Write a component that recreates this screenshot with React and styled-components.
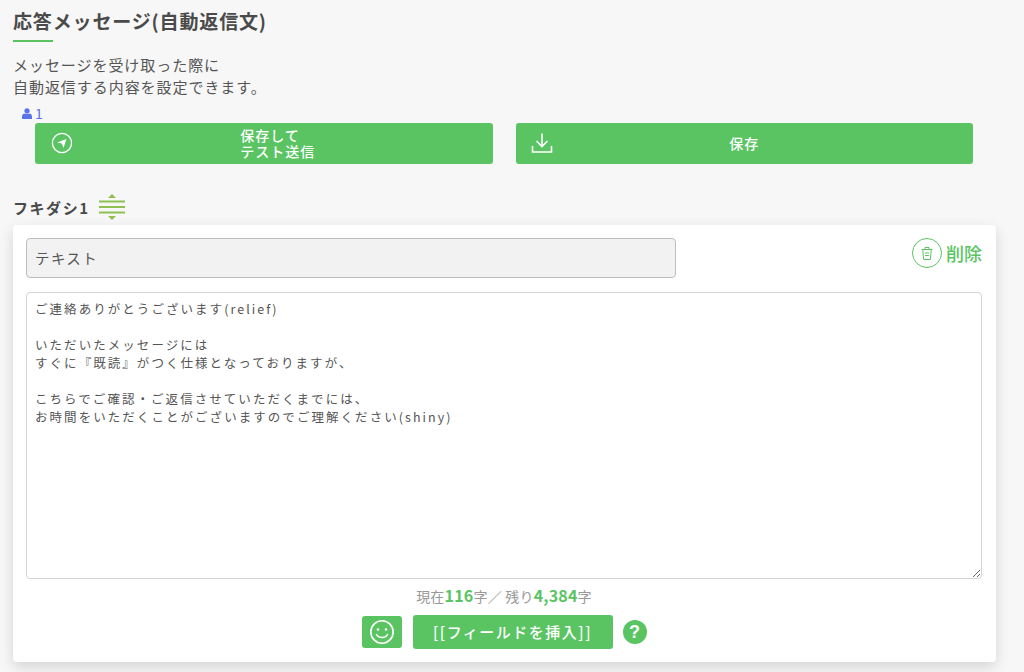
import React from "react";
import styled, { createGlobalStyle } from "styled-components";

const green = "#5ac463";

const GlobalStyle = createGlobalStyle`
  html, body {
    margin: 0;
    padding: 0;
    height: 672px;
    overflow: hidden;
    background: #f7f7f7;
    font-family: "Noto Sans CJK JP", "Noto Sans", sans-serif;
    color: #4a4a4a;
  }
  * { box-sizing: border-box; }
`;

const Page = styled.div`
  display: flex;
  flex-direction: column;
  height: 672px;
  padding: 8px 28px 0 13px;
`;

const Title = styled.h1`
  margin: 0;
  font-size: 19px;
  line-height: 26px;
  font-weight: 700;
  color: #4a4a4a;
  letter-spacing: 0.85px;
`;

const TitleRule = styled.div`
  width: 40px;
  height: 2px;
  margin-top: 6px;
  background: ${green};
`;

const Lead = styled.p`
  margin: 12px 0 0;
  font-size: 15px;
  line-height: 22px;
  color: #555;
  letter-spacing: 0.95px;
`;

const Members = styled.div`
  display: flex;
  align-items: center;
  gap: 3px;
  height: 16px;
  margin: 7px 0 0 9px;
  color: #5b73e8;
  font-size: 14px;
`;

const ButtonRow = styled.div`
  display: flex;
  gap: 23px;
  margin: 2px 23px 0 22px;
`;

const SaveButton = styled.button`
  position: relative;
  flex: 1;
  height: 41px;
  padding: 0 0 2px;
  border: 0;
  border-radius: 3px;
  background: ${green};
  color: #fff;
  font-family: inherit;
  font-size: 14px;
  font-weight: 500;
  line-height: 16px;
  letter-spacing: 1px;
`;

const ButtonIcon = styled.span`
  position: absolute;
  left: 15px;
  top: 9px;
  display: flex;
`;

const TwoLineLabel = styled.span`
  display: inline-block;
  margin-left: 28px;
  text-align: left;
`;

const BubbleHead = styled.div`
  display: flex;
  align-items: center;
  gap: 8px;
  height: 30px;
  margin-top: 28px;
  font-size: 15px;
  font-weight: 700;
  letter-spacing: 1.5px;
  color: #4a4a4a;
`;

const Card = styled.section`
  display: flex;
  flex-direction: column;
  height: 437px;
  margin-top: 3px;
  padding: 13px 14px 13px 13px;
  background: #fff;
  border-radius: 4px;
  box-shadow: 0 5px 14px rgba(0, 0, 0, 0.14);
`;

const TopRow = styled.div`
  display: flex;
  justify-content: space-between;
  align-items: flex-start;
`;

const TypeField = styled.div`
  display: flex;
  align-items: center;
  width: 650px;
  height: 40px;
  padding: 0 0 2px 8px;
  background: #f2f2f2;
  border: 1px solid #bdbdbd;
  border-radius: 4px;
  font-size: 14.5px;
  letter-spacing: 1.4px;
  color: #555;
`;

const DeleteButton = styled.div`
  display: flex;
  align-items: center;
  gap: 4px;
  color: ${green};
  font-size: 18px;
  font-weight: 500;
`;

const DeleteCircle = styled.span`
  display: flex;
  align-items: center;
  justify-content: center;
  width: 30px;
  height: 30px;
  border: 1px solid ${green};
  border-radius: 50%;
`;

const MessageBox = styled.textarea`
  display: block;
  width: 100%;
  height: 288px;
  margin-top: 14px;
  padding: 7px 8px;
  border: 1px solid #d5d5d5;
  border-radius: 4px;
  outline: none;
  resize: vertical;
  font-family: inherit;
  font-size: 12.5px;
  line-height: 18px;
  letter-spacing: 2.05px;
  color: #555;
`;

const Counter = styled.div`
  margin-top: 6px;
  text-align: center;
  font-size: 14px;
  line-height: 20px;
  color: #999;
  letter-spacing: 0.2px;
`;

const Count = styled.b`
  color: ${green};
  font-size: 16px;
  font-weight: 700;
`;

const Actions = styled.div`
  display: flex;
  justify-content: center;
  align-items: center;
  margin-top: 9px;
`;

const EmojiButton = styled.div`
  display: flex;
  align-items: center;
  justify-content: center;
  width: 40px;
  height: 32px;
  margin-right: 11px;
  border-radius: 3px;
  background: ${green};
`;

const InsertButton = styled.div`
  display: flex;
  align-items: center;
  justify-content: center;
  width: 200px;
  height: 34px;
  margin-right: 10px;
  padding-bottom: 2px;
  border-radius: 3px;
  background: ${green};
  color: #fff;
  font-size: 15px;
  font-weight: 500;
  letter-spacing: 1.5px;
`;

const HelpButton = styled.div`
  display: flex;
  align-items: center;
  justify-content: center;
  width: 24px;
  height: 24px;
  border-radius: 50%;
  background: ${green};
  color: #fff;
  font-size: 18px;
  font-weight: 700;
  font-family: "Liberation Sans", sans-serif;
`;

const message = `ご連絡ありがとうございます(relief)

いただいたメッセージには
すぐに『既読』がつく仕様となっておりますが、

こちらでご確認・ご返信させていただくまでには、
お時間をいただくことがございますのでご理解ください(shiny)`;

const UserIcon = () => (
  <svg width="10" height="11" viewBox="0 0 10 11" fill="#5b73e8">
    <circle cx="5" cy="2.8" r="2.6" />
    <path d="M0 11V8.4C0 6.6 1.6 5.8 2.6 5.6 3.4 6.1 6.6 6.1 7.4 5.6 8.4 5.8 10 6.6 10 8.4V11Z" />
  </svg>
);

const SendIcon = () => (
  <svg width="22" height="22" viewBox="0 0 22 22" fill="none">
    <circle cx="12" cy="11" r="9.6" stroke="#fff" strokeWidth="1.3" />
    <path d="M7 10.5 16.5 7 13.5 16 11.8 11.5Z" fill="#fff" />
  </svg>
);

const DownloadIcon = () => (
  <svg width="22" height="22" viewBox="0 0 22 22" fill="none" stroke="#fff" strokeWidth="1.6">
    <path d="M11 1.5V14.5M5.5 9 11 14.5 16.5 9" />
    <path d="M1.5 14V20H20.5V14" />
  </svg>
);

const SortIcon = () => (
  <svg width="28" height="28" viewBox="0 0 28 28" fill="#8cc152">
    <path d="M14 1 18 5H10Z" />
    <rect x="1" y="7.5" width="26" height="2" />
    <rect x="1" y="13" width="26" height="2" />
    <rect x="1" y="18.5" width="26" height="2" />
    <path d="M14 27 18 23H10Z" />
  </svg>
);

const TrashIcon = () => (
  <svg width="14" height="15" viewBox="0 0 14 15" fill="none" stroke="#5ac463" strokeWidth="1">
    <path d="M1.5 3.5H12.5M5 3V1.5H9V3M2.8 3.5 3.6 13.5H10.4L11.2 3.5" />
    <path d="M5 7H9M5 9.5H9" />
  </svg>
);

const SmileIcon = () => (
  <svg width="26" height="26" viewBox="0 0 26 26" fill="none" stroke="#fff" strokeWidth="1.6">
    <circle cx="13" cy="13" r="11.2" />
    <circle cx="9" cy="10.5" r="1.3" fill="#fff" stroke="none" />
    <circle cx="17" cy="10.5" r="1.3" fill="#fff" stroke="none" />
    <path d="M7.5 15.5C9.5 19.5 16.5 19.5 18.5 15.5" strokeLinecap="round" />
  </svg>
);

export default function App() {
  return (
    <Page>
      <GlobalStyle />
      <Title>応答メッセージ(自動返信文)</Title>
      <TitleRule />
      <Lead>
        メッセージを受け取った際に
        <br />
        自動返信する内容を設定できます。
      </Lead>
      <Members>
        <UserIcon />1
      </Members>
      <ButtonRow>
        <SaveButton>
          <ButtonIcon>
            <SendIcon />
          </ButtonIcon>
          <TwoLineLabel>
            保存して
            <br />
            テスト送信
          </TwoLineLabel>
        </SaveButton>
        <SaveButton>
          <ButtonIcon>
            <DownloadIcon />
          </ButtonIcon>
          保存
        </SaveButton>
      </ButtonRow>
      <BubbleHead>
        フキダシ1
        <SortIcon />
      </BubbleHead>
      <Card>
        <TopRow>
          <TypeField>テキスト</TypeField>
          <DeleteButton>
            <DeleteCircle>
              <TrashIcon />
            </DeleteCircle>
            削除
          </DeleteButton>
        </TopRow>
        <MessageBox defaultValue={message} />
        <Counter>
          現在<Count>116</Count>字／ 残り<Count>4,384</Count>字
        </Counter>
        <Actions>
          <EmojiButton>
            <SmileIcon />
          </EmojiButton>
          <InsertButton>[[フィールドを挿入]]</InsertButton>
          <HelpButton>?</HelpButton>
        </Actions>
      </Card>
    </Page>
  );
}
